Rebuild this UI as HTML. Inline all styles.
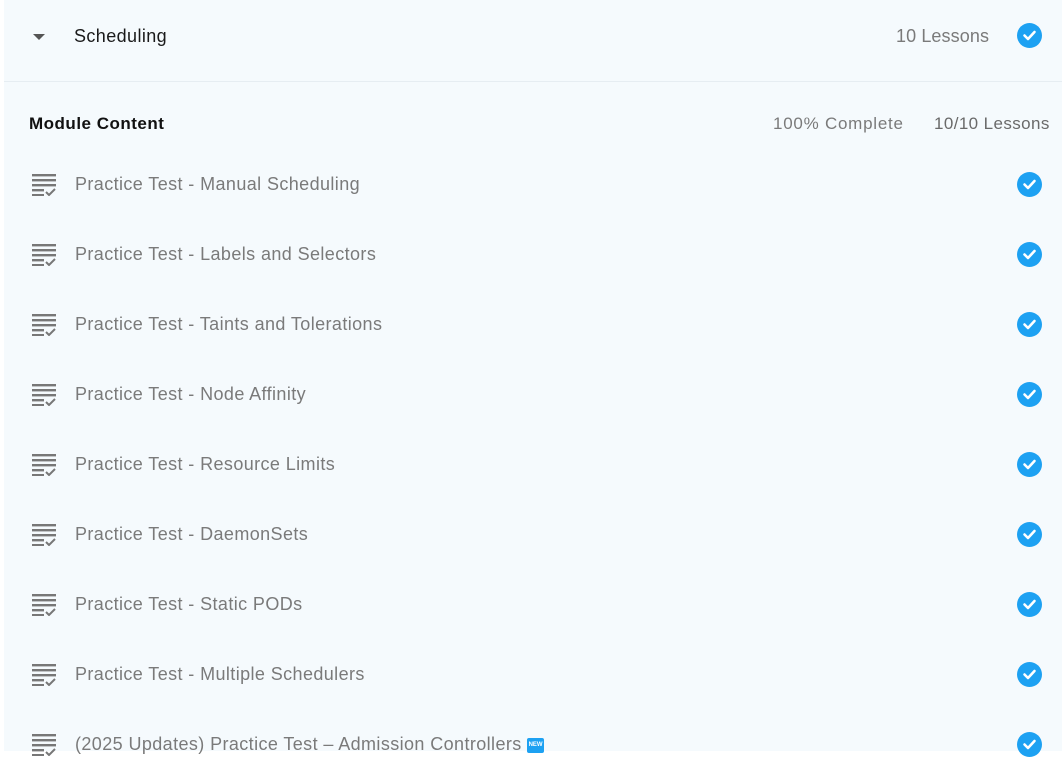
<!DOCTYPE html>
<html><head><style>
body{margin:0;width:1062px;height:751px;overflow:hidden;background:#fff;font-family:"Liberation Sans",sans-serif;}
.wrap{position:absolute;left:4px;top:0;width:1058px;height:751px;background:#f5fafd;}
.sep{position:absolute;left:4px;top:81px;width:1058px;height:1px;background:#e6edf2;}
.t{position:absolute;white-space:nowrap;letter-spacing:0.4px;}
.chk{position:absolute;width:25px;height:25px;border-radius:50%;background:#1da1f2;}
.chk svg{position:absolute;left:0;top:0}
.ic{position:absolute;left:32px;}
.row{position:absolute;left:0;width:1062px;height:70px;}
.row .t{top:25px;font-size:18px;color:#7a7a7a;left:75px}
</style></head><body>
<div class="wrap"></div>
<div class="sep"></div>
<svg style="position:absolute;left:32px;top:33px" width="14" height="8"><path d="M1 1h12L7 7z" fill="#555"/></svg>
<div class="t" style="left:74px;top:26px;font-size:18px;color:#1a1a1a">Scheduling</div>
<div class="t" style="left:896px;top:26px;font-size:18px;color:#7a7a7a;letter-spacing:0.1px">10 Lessons</div>
<div class="chk" style="left:1017px;top:23px"><svg width="25" height="25"><path d="M7.5 12.5l3.5 3.5 6.5-7" stroke="#fff" stroke-width="2.6" fill="none" stroke-linecap="round" stroke-linejoin="round"/></svg></div>
<div class="t" style="left:29px;top:114px;font-size:17px;font-weight:bold;color:#111;letter-spacing:0.5px">Module Content</div>
<div class="t" style="left:773px;top:114px;font-size:17px;color:#7a7a7a;letter-spacing:0.75px">100% Complete</div>
<div class="t" style="left:934px;top:114px;font-size:17px;color:#6a6a6a;letter-spacing:0.4px">10/10 Lessons</div>
<div class="row" style="top:149px"><svg class="ic" style="top:25px" width="24" height="22"><g fill="#777"><rect x="0" y="0" width="24" height="2.4"/><rect x="0" y="5" width="24" height="2.4"/><rect x="0" y="10" width="24" height="2.4"/><rect x="0" y="15" width="12" height="2.4"/><rect x="0" y="20" width="12" height="2.4"/></g><path d="M14 18l3 3 6-6" stroke="#777" stroke-width="2" fill="none"/></svg><div class="t">Practice Test - Manual Scheduling</div><div class="chk" style="left:1017px;top:23px"><svg width="25" height="25"><path d="M7.5 12.5l3.5 3.5 6.5-7" stroke="#fff" stroke-width="2.6" fill="none" stroke-linecap="round" stroke-linejoin="round"/></svg></div></div>
<div class="row" style="top:219px"><svg class="ic" style="top:25px" width="24" height="22"><g fill="#777"><rect x="0" y="0" width="24" height="2.4"/><rect x="0" y="5" width="24" height="2.4"/><rect x="0" y="10" width="24" height="2.4"/><rect x="0" y="15" width="12" height="2.4"/><rect x="0" y="20" width="12" height="2.4"/></g><path d="M14 18l3 3 6-6" stroke="#777" stroke-width="2" fill="none"/></svg><div class="t">Practice Test - Labels and Selectors</div><div class="chk" style="left:1017px;top:23px"><svg width="25" height="25"><path d="M7.5 12.5l3.5 3.5 6.5-7" stroke="#fff" stroke-width="2.6" fill="none" stroke-linecap="round" stroke-linejoin="round"/></svg></div></div>
<div class="row" style="top:289px"><svg class="ic" style="top:25px" width="24" height="22"><g fill="#777"><rect x="0" y="0" width="24" height="2.4"/><rect x="0" y="5" width="24" height="2.4"/><rect x="0" y="10" width="24" height="2.4"/><rect x="0" y="15" width="12" height="2.4"/><rect x="0" y="20" width="12" height="2.4"/></g><path d="M14 18l3 3 6-6" stroke="#777" stroke-width="2" fill="none"/></svg><div class="t">Practice Test - Taints and Tolerations</div><div class="chk" style="left:1017px;top:23px"><svg width="25" height="25"><path d="M7.5 12.5l3.5 3.5 6.5-7" stroke="#fff" stroke-width="2.6" fill="none" stroke-linecap="round" stroke-linejoin="round"/></svg></div></div>
<div class="row" style="top:359px"><svg class="ic" style="top:25px" width="24" height="22"><g fill="#777"><rect x="0" y="0" width="24" height="2.4"/><rect x="0" y="5" width="24" height="2.4"/><rect x="0" y="10" width="24" height="2.4"/><rect x="0" y="15" width="12" height="2.4"/><rect x="0" y="20" width="12" height="2.4"/></g><path d="M14 18l3 3 6-6" stroke="#777" stroke-width="2" fill="none"/></svg><div class="t">Practice Test - Node Affinity</div><div class="chk" style="left:1017px;top:23px"><svg width="25" height="25"><path d="M7.5 12.5l3.5 3.5 6.5-7" stroke="#fff" stroke-width="2.6" fill="none" stroke-linecap="round" stroke-linejoin="round"/></svg></div></div>
<div class="row" style="top:429px"><svg class="ic" style="top:25px" width="24" height="22"><g fill="#777"><rect x="0" y="0" width="24" height="2.4"/><rect x="0" y="5" width="24" height="2.4"/><rect x="0" y="10" width="24" height="2.4"/><rect x="0" y="15" width="12" height="2.4"/><rect x="0" y="20" width="12" height="2.4"/></g><path d="M14 18l3 3 6-6" stroke="#777" stroke-width="2" fill="none"/></svg><div class="t">Practice Test - Resource Limits</div><div class="chk" style="left:1017px;top:23px"><svg width="25" height="25"><path d="M7.5 12.5l3.5 3.5 6.5-7" stroke="#fff" stroke-width="2.6" fill="none" stroke-linecap="round" stroke-linejoin="round"/></svg></div></div>
<div class="row" style="top:499px"><svg class="ic" style="top:25px" width="24" height="22"><g fill="#777"><rect x="0" y="0" width="24" height="2.4"/><rect x="0" y="5" width="24" height="2.4"/><rect x="0" y="10" width="24" height="2.4"/><rect x="0" y="15" width="12" height="2.4"/><rect x="0" y="20" width="12" height="2.4"/></g><path d="M14 18l3 3 6-6" stroke="#777" stroke-width="2" fill="none"/></svg><div class="t">Practice Test - DaemonSets</div><div class="chk" style="left:1017px;top:23px"><svg width="25" height="25"><path d="M7.5 12.5l3.5 3.5 6.5-7" stroke="#fff" stroke-width="2.6" fill="none" stroke-linecap="round" stroke-linejoin="round"/></svg></div></div>
<div class="row" style="top:569px"><svg class="ic" style="top:25px" width="24" height="22"><g fill="#777"><rect x="0" y="0" width="24" height="2.4"/><rect x="0" y="5" width="24" height="2.4"/><rect x="0" y="10" width="24" height="2.4"/><rect x="0" y="15" width="12" height="2.4"/><rect x="0" y="20" width="12" height="2.4"/></g><path d="M14 18l3 3 6-6" stroke="#777" stroke-width="2" fill="none"/></svg><div class="t">Practice Test - Static PODs</div><div class="chk" style="left:1017px;top:23px"><svg width="25" height="25"><path d="M7.5 12.5l3.5 3.5 6.5-7" stroke="#fff" stroke-width="2.6" fill="none" stroke-linecap="round" stroke-linejoin="round"/></svg></div></div>
<div class="row" style="top:639px"><svg class="ic" style="top:25px" width="24" height="22"><g fill="#777"><rect x="0" y="0" width="24" height="2.4"/><rect x="0" y="5" width="24" height="2.4"/><rect x="0" y="10" width="24" height="2.4"/><rect x="0" y="15" width="12" height="2.4"/><rect x="0" y="20" width="12" height="2.4"/></g><path d="M14 18l3 3 6-6" stroke="#777" stroke-width="2" fill="none"/></svg><div class="t">Practice Test - Multiple Schedulers</div><div class="chk" style="left:1017px;top:23px"><svg width="25" height="25"><path d="M7.5 12.5l3.5 3.5 6.5-7" stroke="#fff" stroke-width="2.6" fill="none" stroke-linecap="round" stroke-linejoin="round"/></svg></div></div>
<div class="row" style="top:709px"><svg class="ic" style="top:25px" width="24" height="22"><g fill="#777"><rect x="0" y="0" width="24" height="2.4"/><rect x="0" y="5" width="24" height="2.4"/><rect x="0" y="10" width="24" height="2.4"/><rect x="0" y="15" width="12" height="2.4"/><rect x="0" y="20" width="12" height="2.4"/></g><path d="M14 18l3 3 6-6" stroke="#777" stroke-width="2" fill="none"/></svg><div class="t">(2025 Updates) Practice Test – Admission Controllers <span style="display:inline-block;width:17px;height:15px;background:#1da1f2;color:#fff;font-size:6px;font-weight:bold;line-height:15px;text-align:center;vertical-align:middle;border-radius:2px;letter-spacing:0">NEW</span></div><div class="chk" style="left:1017px;top:23px"><svg width="25" height="25"><path d="M7.5 12.5l3.5 3.5 6.5-7" stroke="#fff" stroke-width="2.6" fill="none" stroke-linecap="round" stroke-linejoin="round"/></svg></div></div>
</body></html>
